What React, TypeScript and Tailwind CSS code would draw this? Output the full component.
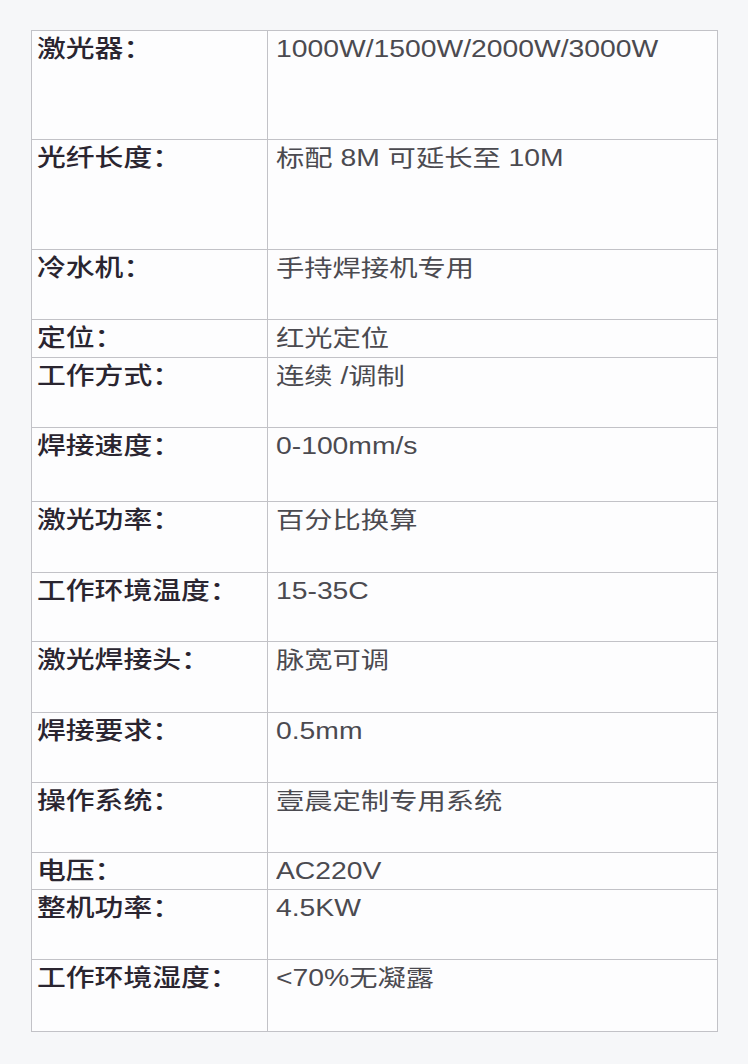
// 激光焊接机参数表 — 两列规格表，左列参数名，右列取值

type Spec = { label: string; value: string; h: string };

const SPECS: Spec[] = [
  { label: "激光器：", value: "1000W/1500W/2000W/3000W", h: "h-[109px]" },
  { label: "光纤长度：", value: "标配 8M 可延长至 10M", h: "h-[110px]" },
  { label: "冷水机：", value: "手持焊接机专用", h: "h-[70px]" },
  { label: "定位：", value: "红光定位", h: "h-[38px]" },
  { label: "工作方式：", value: "连续 /调制", h: "h-[70px]" },
  { label: "焊接速度：", value: "0-100mm/s", h: "h-[74px]" },
  { label: "激光功率：", value: "百分比换算", h: "h-[71px]" },
  { label: "工作环境温度：", value: "15-35C", h: "h-[69px]" },
  { label: "激光焊接头：", value: "脉宽可调", h: "h-[71px]" },
  { label: "焊接要求：", value: "0.5mm", h: "h-[70px]" },
  { label: "操作系统：", value: "壹晨定制专用系统", h: "h-[70px]" },
  { label: "电压：", value: "AC220V", h: "h-[37px]" },
  { label: "整机功率：", value: "4.5KW", h: "h-[70px]" },
  { label: "工作环境湿度：", value: "<70%无凝露", h: "h-[72px]" },
];

export default function App() {
  return (
    <div
      className="w-[748px] h-[1064px] bg-[#f6f7f9] pt-[30px] pl-[31px]"
      style={{ fontFamily: '"Liberation Sans", "Noto Sans CJK SC", sans-serif' }}
    >
      <table className="w-[686px] border-collapse bg-[#fdfdfe] table-fixed">
        <colgroup>
          <col className="w-[236px]" />
          <col className="w-[450px]" />
        </colgroup>
        <tbody>
          {SPECS.map((s) => (
            <tr key={s.label} className={s.h}>
              <td className="border border-[#c2c2c7] align-top pl-[5px] pt-[3px] overflow-hidden">
                <span className="inline-block origin-left scale-x-[1.2] whitespace-nowrap text-[24px] leading-[30px] font-medium text-[#2a2530]">
                  {s.label}
                </span>
              </td>
              <td className="border border-[#c2c2c7] align-top pl-[8px] pt-[3px] overflow-hidden">
                <span className="inline-block origin-left scale-x-[1.23] whitespace-nowrap text-[23px] leading-[30px] text-[#4b4a50]">
                  {s.value}
                </span>
              </td>
            </tr>
          ))}
        </tbody>
      </table>
    </div>
  );
}
